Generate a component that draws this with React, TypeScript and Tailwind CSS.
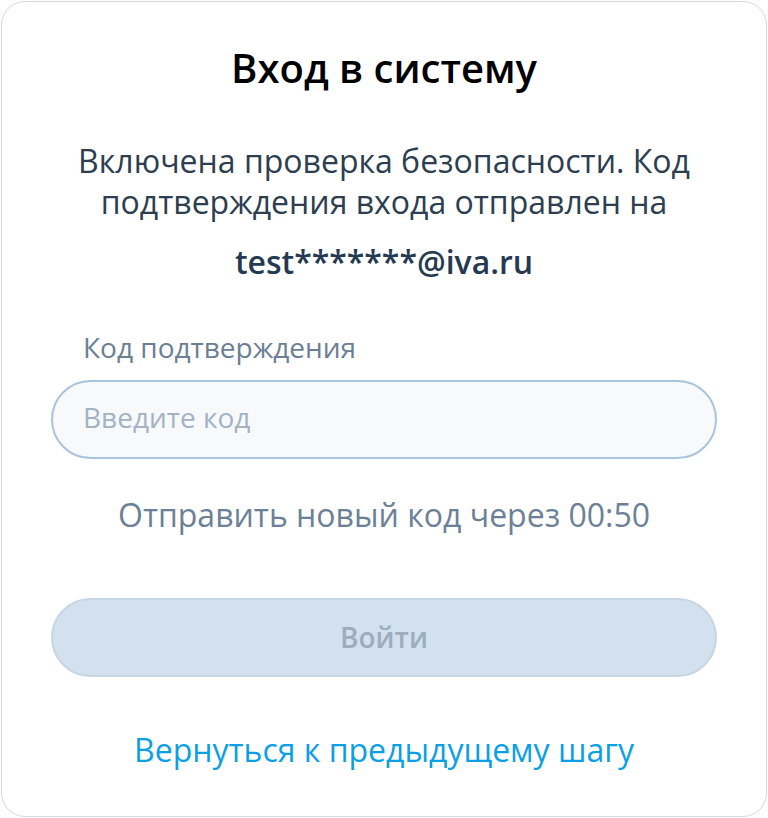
export default function App() {
  return (
    <div className="w-[768px] h-[818px] bg-white p-px" style={{ fontFamily: '"Open Sans", "Noto Sans", sans-serif' }}>
      <div className="h-full border border-[#d6d9dd] rounded-[24px] bg-white flex flex-col items-center px-[49px] pt-[40px]">
        <h1 className="text-[40px] leading-[52px] font-semibold text-black">Вход в систему</h1>

        <p className="mt-[46px] text-[32px] leading-[41px] text-[#2c3e50] text-center">
          Включена проверка безопасности. Код подтверждения входа отправлен на
        </p>
        <p className="mt-[19px] text-[32px] leading-[41px] font-semibold text-[#253a52]">test*******@iva.ru</p>

        <label className="mt-[47px] self-stretch pl-[32px] text-[28px] leading-[36px] text-[#6b7f94]">
          Код подтверждения
        </label>
        <input
          placeholder="Введите код"
          className="mt-[15px] w-full h-[79px] rounded-full border-2 border-[#a9c4dd] bg-[#f7f9fb] pl-[30px] pr-[30px] pb-[5px] text-[28px] text-[#2c3e50] placeholder:text-[#a3b3c4] outline-none"
        />

        <p className="mt-[36px] text-[32px] leading-[40px] text-[#6c8197]">Отправить новый код через 00:50</p>

        <button className="mt-[63px] w-full h-[79px] rounded-full border-2 border-[#c6d6e5] bg-[#d3e0ed] pb-[2px] text-[28px] font-semibold text-[#9badbf]">
          Войти
        </button>

        <a className="mt-[53px] text-[32px] leading-[40px] text-[#0b9fe6]">Вернуться к предыдущему шагу</a>
      </div>
    </div>
  );
}
